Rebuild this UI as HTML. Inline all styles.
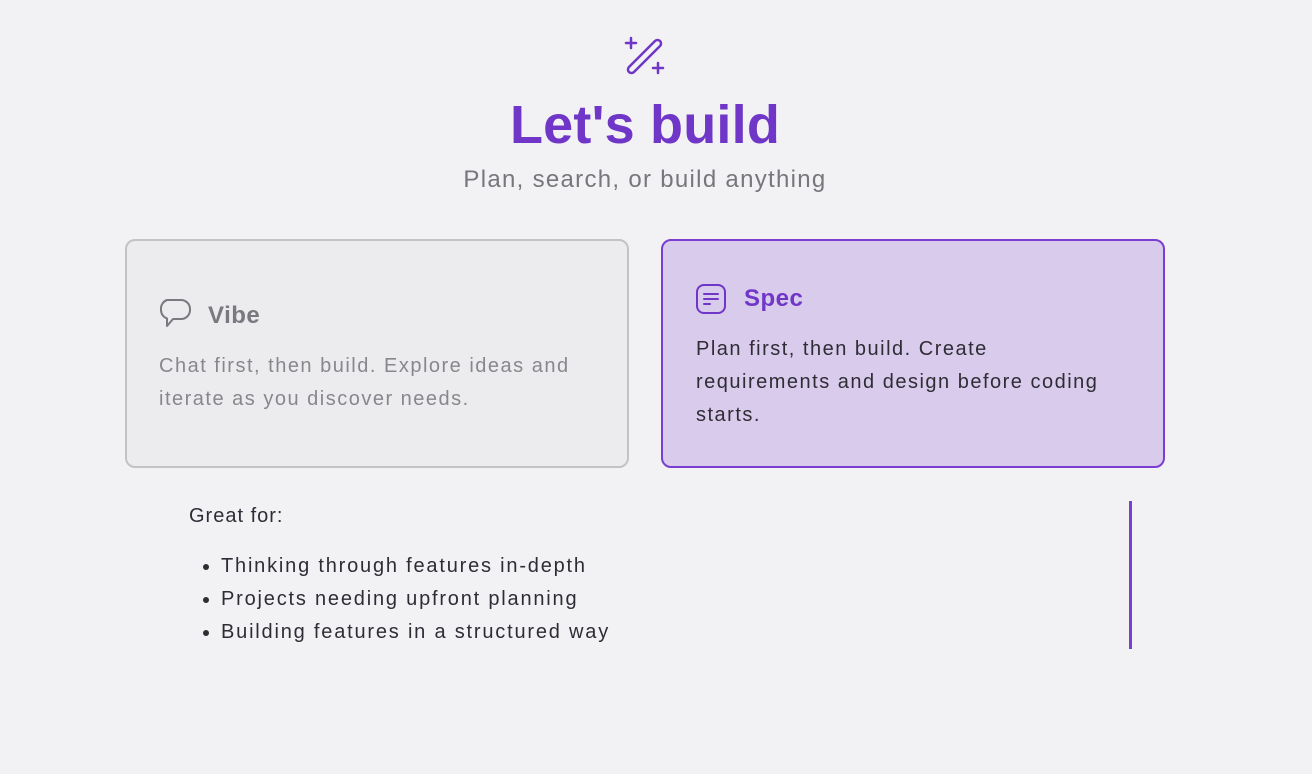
<!DOCTYPE html>
<html><head><style>
body{margin:0;width:1312px;height:774px;background:#f2f2f5;font-family:"Liberation Sans",sans-serif;position:relative;overflow:hidden}
.abs{position:absolute}
h1{position:absolute;left:0;width:1290px;top:94px;margin:0;text-align:center;font-size:54px;font-weight:bold;color:#6f36c7;letter-spacing:0.2px}
.sub{left:0;width:1290px;top:166px;text-align:center;font-size:24px;color:#77767c;letter-spacing:1.3px}
.card{position:absolute;top:239px;width:504px;height:229px;border-radius:10px;box-sizing:border-box}
.c1{left:125px;border:2px solid #c3c3c7;background:#ececef}
.c2{left:661px;border:2px solid #7a3fd2;background:#d9cbec}
.t{font-size:24px;font-weight:bold;letter-spacing:0.5px}
.d{font-size:20px;line-height:33px;letter-spacing:1.5px;white-space:nowrap}
li{font-size:20px;line-height:33px;color:#2e2d35;letter-spacing:1.8px;white-space:nowrap}
</style></head><body>
<svg class="abs" style="left:624px;top:36px" width="42" height="42" viewBox="0 0 42 42" fill="none" stroke="#6f36c7" stroke-width="2.5" stroke-linecap="round">
<path d="M7 2v10M2 7h10"/><path d="M34 27v10M29 32h10"/>
<path d="M31 5a3.5 3.5 0 0 1 5 5L10 36a3.5 3.5 0 0 1-5-5z"/></svg>
<h1>Let's build</h1>
<div class="abs sub">Plan, search, or build anything</div>
<div class="card c1">
<svg class="abs" style="left:32px;top:57px" width="34" height="32" viewBox="0 0 34 32" fill="none" stroke="#7a797f" stroke-width="2" stroke-linejoin="round"><path d="M8 2h14a9 9 0 0 1 9 9v1a9 9 0 0 1-9 9h-8l-6 7v-7.5a9 9 0 0 1-6-8.5v-1a9 9 0 0 1 6-9z"/></svg>
<div class="abs t" style="left:81px;top:61px;color:#7a797f">Vibe</div>
<div class="abs d" style="left:32px;top:109px;color:#88878d">Chat first, then build. Explore ideas and<br>iterate as you discover needs.</div>
</div>
<div class="card c2">
<svg class="abs" style="left:32px;top:42px" width="32" height="32" viewBox="0 0 32 32" fill="none" stroke="#6f36c7" stroke-width="2" stroke-linecap="round"><rect x="2" y="2" width="28" height="28" rx="7"/><path d="M9 11h14M9 16h14M9 21h6"/></svg>
<div class="abs t" style="left:81px;top:44px;color:#6f36c7">Spec</div>
<div class="abs d" style="left:33px;top:92px;color:#2e2d35">Plan first, then build. Create<br>requirements and design before coding<br>starts.</div>
</div>
<div class="abs" style="left:189px;top:505px;font-size:20px;color:#2e2d35;letter-spacing:1px">Great for:</div>
<ul class="abs" style="left:181px;top:550px;margin:0;padding-left:40px">
<li>Thinking through features in-depth</li><li>Projects needing upfront planning</li><li>Building features in a structured way</li></ul>
<div class="abs" style="left:1129px;top:501px;width:3px;height:148px;background:#7a3fd2"></div>
</body></html>
